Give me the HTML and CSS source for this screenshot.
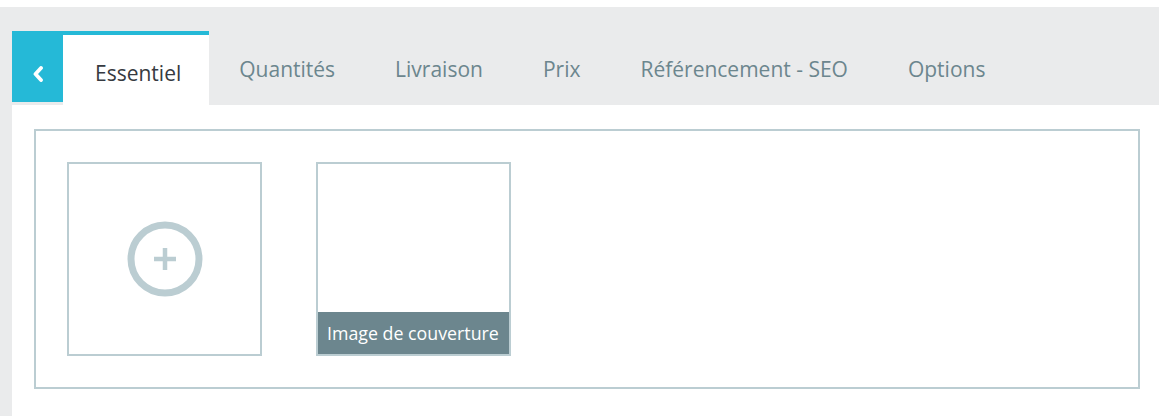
FILE: index.html
```html
<!DOCTYPE html>
<html lang="fr">
<head>
    <meta charset="UTF-8">
    <meta name="viewport" content="width=device-width, initial-scale=1.0">
    <title>Produit - Images</title>
    <link rel="stylesheet" href="styles.css">
</head>
<body>
    <div class="product-page">
        <nav class="tabs">
            <button class="tab-back" aria-label="Retour">
                <svg width="12" height="16" viewBox="0 0 12 16">
                    <path d="M9 2 L3.5 8 L9 14" fill="none" stroke="#fff" stroke-width="3.8" stroke-linecap="round" stroke-linejoin="round"/>
                </svg>
            </button>
            <a class="tab active" href="#">Essentiel</a>
            <a class="tab" href="#">Quantités</a>
            <a class="tab" href="#">Livraison</a>
            <a class="tab" href="#">Prix</a>
            <a class="tab" href="#">Référencement - SEO</a>
            <a class="tab" href="#">Options</a>
        </nav>

        <section class="tab-content">
            <div class="images-panel">
                <div class="image-card add-image">
                    <svg width="76" height="76" viewBox="0 0 76 76">
                        <circle cx="38" cy="38" r="34" fill="none" stroke="#bbcdd2" stroke-width="7"/>
                        <path d="M38 27 V49 M27 38 H49" stroke="#bbcdd2" stroke-width="4.5"/>
                    </svg>
                </div>
                <div class="image-card cover">
                    <div class="image-preview"></div>
                    <div class="cover-label">Image de couverture</div>
                </div>
            </div>
        </section>
    </div>
</body>
</html>
```

FILE: styles.css
```css
:root {
    --blue: #25b9d7;
    --gray-bg: #eaebec;
    --border: #bbcdd2;
    --muted: #6c868e;
    --dark: #363a41;
}

* {
    margin: 0;
    padding: 0;
    box-sizing: border-box;
}

body {
    background: #fff;
    padding-top: 7px;
    font-family: 'Open Sans', 'Noto Sans', sans-serif;
    height: 416px;
    overflow: hidden;
}

.product-page {
    background: var(--gray-bg);
    padding-left: 12px;
    min-height: 409px;
}

.tabs {
    display: flex;
    align-items: flex-start;
    padding-top: 24px;
}

.tab-back {
    width: 51px;
    height: 71px;
    border: none;
    background: var(--blue);
    display: flex;
    justify-content: center;
    align-items: flex-start;
    padding-top: 35px;
    cursor: pointer;
}

.tab {
    display: block;
    padding: 20px 30px 22px 30px;
    border-top: 4px solid transparent;
    font-size: 21px;
    line-height: 28px;
    color: var(--muted);
    text-decoration: none;
    white-space: nowrap;
}

.tab.active {
    background: #fff;
    border-top-color: var(--blue);
    color: var(--dark);
    padding: 24px 28px 18px 32px;
}

.tab-content {
    background: #fff;
    padding: 24px 19px 27px 22px;
    min-height: 311px;
}

.images-panel {
    display: flex;
    gap: 54px;
    border: 2px solid var(--border);
    padding: 31px;
    height: 260px;
}

.image-card {
    width: 195px;
    height: 194px;
    border: 2px solid var(--border);
    display: flex;
    flex-direction: column;
}

.add-image {
    align-items: center;
    justify-content: center;
    cursor: pointer;
}

.image-preview {
    flex: 1;
}

.cover-label {
    height: 42px;
    background: var(--muted);
    color: #fff;
    font-size: 17.8px;
    line-height: 42px;
    padding-left: 9px;
    white-space: nowrap;
}
```
